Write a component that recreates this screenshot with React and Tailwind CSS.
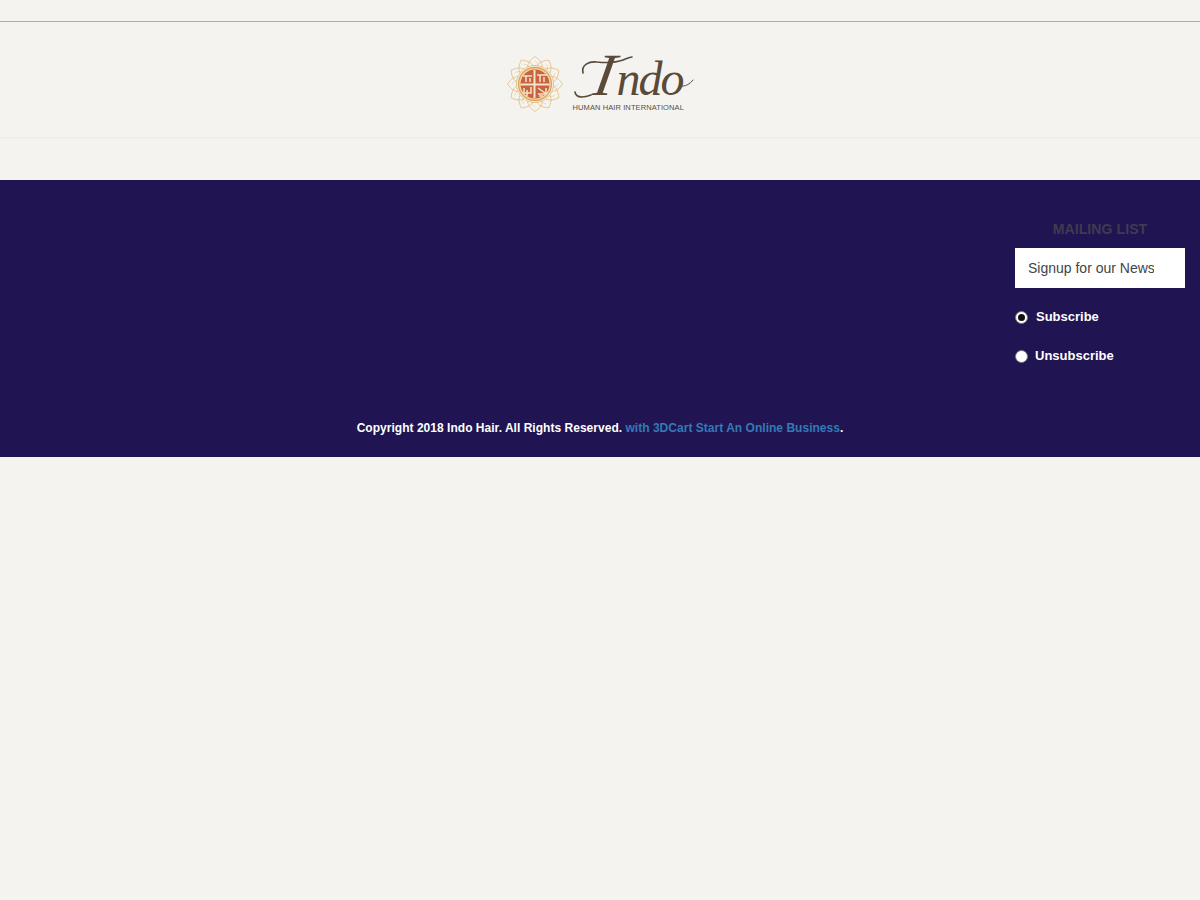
import React from "react";

const petals = Array.from({ length: 12 }, (_, i) => i * 30);
const sans = "font-['Liberation_Sans',Arial,sans-serif]";

function LogoMark() {
  return (
    <svg width="58" height="58" viewBox="0 0 58 58" className="shrink-0">
      {/* lotus outline */}
      {petals.map((deg) => (
        <g key={deg} transform={`rotate(${deg} 29 29)`} fill="none" stroke="#e3b878" strokeWidth="0.7">
          <path d="M29 1.5C33.5 4.5 36.5 8 36.5 13C33.5 12.5 31 13.5 29 16C27 13.5 24.5 12.5 21.5 13C21.5 8 24.5 4.5 29 1.5Z" />
          <path d="M29 6C31 7.5 32.5 9.5 32.5 12" strokeWidth="0.4" />
        </g>
      ))}
      <circle cx="29" cy="29" r="18.5" fill="#f4f2ee" stroke="#e3b878" strokeWidth="0.8" />
      <circle cx="29" cy="29" r="16.5" fill="#f2d7a6" stroke="#dfa456" strokeWidth="1.3" />
      <circle cx="29" cy="29" r="14.5" fill="#c9623f" />
      {/* cross and inner script */}
      <g stroke="#f3e4cd" fill="none">
        <path d="M14.5 29.5H43.5" strokeWidth="2" />
        <path d="M28.5 15V43" strokeWidth="2" />
        <path d="M17 21H26M20 21V27M24 23V27M31 20H41M34 20V27M38 22V27" strokeWidth="1.5" />
        <path d="M18 33V38H25V32M21 35V41M32 33L39 38M32 39H40V33M33 41H37" strokeWidth="1.5" />
      </g>
    </svg>
  );
}

function Logo() {
  return (
    <div className="flex items-start">
      <LogoMark />
      <div className="ml-[9px] flex flex-col w-[122px]">
        <div className="relative h-[48px]">
          <span className="block pl-[22px] font-['Liberation_Serif',serif] italic text-[48px] leading-[48px] text-[#5a4a3a] tracking-[-2px] whitespace-nowrap">
            <span className="inline-block text-[60px] leading-[40px] -skew-x-[10deg] mr-[4px]">I</span>ndo
          </span>
          {/* swashes of the wordmark */}
          <svg width="122" height="50" viewBox="0 0 122 50" fill="none" stroke="#5a4a3a" className="absolute left-0 top-0">
            <path d="M10 18C8 10 16 6 24 7C34 8 42 8 50 5C54 3.5 57 2 59 2" strokeWidth="1.6" strokeLinecap="round" />
            <path d="M2 37C3 43 10 43 18 40" strokeWidth="1.6" strokeLinecap="round" />
            <path d="M107 31C112 32 117 29 120 25" strokeWidth="1" strokeLinecap="round" />
          </svg>
        </div>
        <span className={`${sans} text-[7.5px] leading-[9px] tracking-[0.1px] whitespace-nowrap text-[#5a4d40]`}>
          HUMAN HAIR INTERNATIONAL
        </span>
      </div>
    </div>
  );
}

function RadioRow({ label, checked, gap }) {
  return (
    <label className={`flex items-center h-[20px] text-[13px] font-bold text-white ${gap}`}>
      <span className="w-[13px] h-[13px] rounded-full bg-white border border-[#767676] flex items-center justify-center shrink-0">
        {checked && <span className="w-[7px] h-[7px] rounded-full bg-[#111]" />}
      </span>
      <span>{label}</span>
    </label>
  );
}

export default function App() {
  return (
    <div className={`min-h-[900px] bg-[#f4f3ef] ${sans}`}>
      <div className="h-[22px] border-b border-[#e39a82]" />

      <header className="h-[117px] border-b-2 border-[#efede9] flex justify-center pt-[33px]">
        <Logo />
      </header>

      <div className="h-[41px]" />

      <footer className="h-[277px] bg-[#201552] flex flex-col">
        <div className="flex justify-end pr-[15px] pt-[41px]">
          <div className="w-[170px] flex flex-col">
            <h3 className="text-[14px] leading-[16px] font-bold text-center text-[#413b4f] tracking-[0.1px] h-[27px]">
              MAILING LIST
            </h3>
            <input
              type="text"
              defaultValue="Signup for our Newsletter"
              className="h-[40px] w-full bg-white pl-[13px] pr-[31px] text-[14px] text-[#444] outline-none"
            />
            <div className="mt-[19px] flex flex-col gap-[19px]">
              <RadioRow label="Subscribe" checked gap="gap-[8px]" />
              <RadioRow label="Unsubscribe" gap="gap-[7px]" />
            </div>
          </div>
        </div>
        <p className="mt-[55px] text-center text-[12px] leading-[14px] font-bold text-white tracking-[0.025px]">
          Copyright 2018 Indo Hair. All Rights Reserved.{" "}
          <a href="#" className="text-[#337ab7]">with 3DCart Start An Online Business</a>.
        </p>
      </footer>
    </div>
  );
}
